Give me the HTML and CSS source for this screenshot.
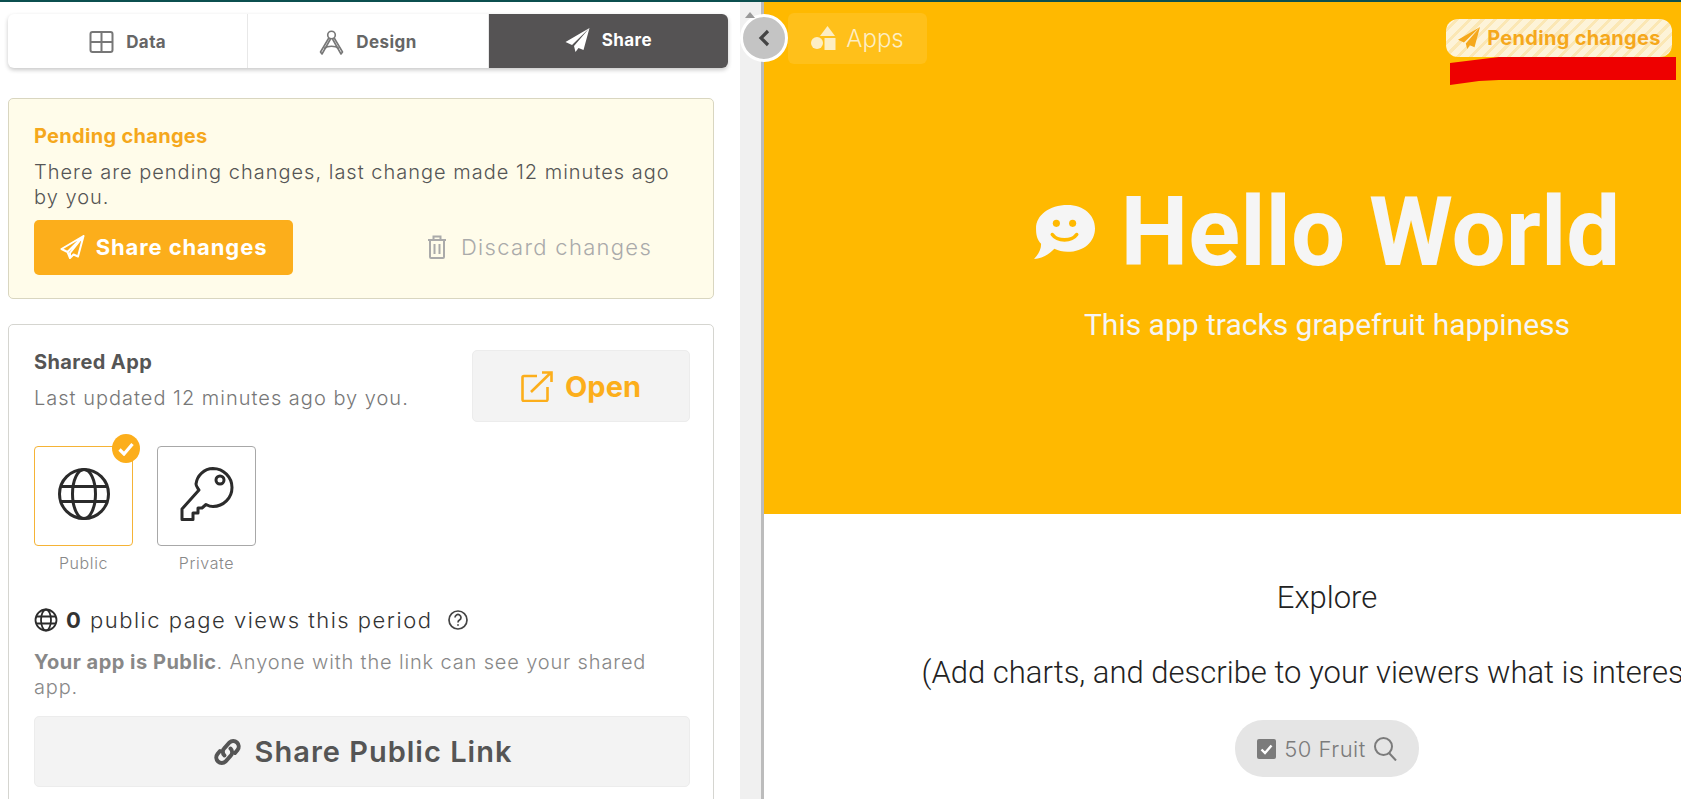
FILE: index.html

```html
<!DOCTYPE HTML>
<html>
<head>
<meta charset="utf-8">
<title>Share</title>
<link rel="stylesheet" href="styles.css">
</head>

<body>
<div class="topline"></div>
<div class="app">
	<div class="sidebar">
		<div class="tabs">
			<a class="tab">
				<svg width="25" height="22" viewBox="0 0 25 22" fill="none" stroke="#777" stroke-width="2"><rect x="1.5" y="1" width="22" height="20" rx="2"/><path d="M12.5 1v20M1.5 11h22"/></svg>
				<span>Data</span>
			</a>
			<a class="tab">
				<svg width="25" height="25" viewBox="0 0 25 25" fill="none" stroke="#777" stroke-width="1.600" stroke-linejoin="round"><circle cx="12.500" cy="5" r="3.800"/><path d="M9.800 8 L1.500 22 L3 24 L11.500 9M15.200 8 L23.500 22 L22 24 L13.500 9"/><path d="M5 18.500 C9 15.500 16 15.500 20 18.500"/></svg>
				<span>Design</span>
			</a>
			<a class="tab ac">
				<svg width="25" height="24" viewBox="0 0 25 24" fill="#fff"><path d="M24.500 0 L0.500 14 L7 17 Z M24.500 0 L9 18 L10.500 24 L13.500 20 L18.500 22 Z"/></svg>
				<span>Share</span>
			</a>
		</div>

		<div class="card pending">
			<h3>Pending changes</h3>
			<p>There are pending changes, last change made 12 minutes ago by you.</p>
			<div class="pending-actions">
				<a class="btn-share">
					<svg width="25" height="24" viewBox="0 0 25 24" fill="none" stroke="#fff" stroke-width="2" stroke-linejoin="round"><path d="M23.500 1 L1.500 14 L7.500 17 L10 23 L13.500 19.500 L18 21.500 Z M7.500 17 L23.500 1 L10 18 V23"/></svg>
					Share changes
				</a>
				<a class="btn-discard">
					<svg width="20" height="24" viewBox="0 0 20 24" fill="none" stroke="#aaa" stroke-width="2"><path d="M1 5h18M6.500 5V1.500h7V5M3 5v17a1 1 0 0 0 1 1h12a1 1 0 0 0 1-1V5M7.500 9v10M12.500 9v10"/></svg>
					Discard changes
				</a>
			</div>
		</div>

		<div class="card shared">
			<div class="shared-head">
				<div>
					<h4>Shared App</h4>
					<p class="updated">Last updated 12 minutes ago by you.</p>
				</div>
				<a class="btn-grey btn-open">
					<svg width="32" height="31" viewBox="0 0 32 31" fill="none" stroke="#fcae1b" stroke-width="2.6"><path d="M16 5H3a1.500 1.500 0 0 0-1.500 1.500v22a1.500 1.500 0 0 0 1.500 1.500h22a1.500 1.500 0 0 0 1.500-1.500V16M10 21 L30 1.500M21 1.500h9.500V11"/></svg>
					Open
				</a>
			</div>

			<div class="access">
				<div class="access-item">
					<div class="access-box on">
						<svg width="52" height="52" viewBox="0 0 52 52" fill="none" stroke="#2b2b2b" stroke-width="3"><circle cx="26" cy="26" r="24.500"/><ellipse cx="26" cy="26" rx="11.500" ry="24.500"/><path d="M3 18.500h46M3 33.500h46"/></svg>
						<span class="badge"><svg width="16" height="14" viewBox="0 0 16 14" fill="none" stroke="#fff" stroke-width="3.200"><path d="M1.500 7.500 L6 12 L14.500 2"/></svg></span>
					</div>
					<span>Public</span>
				</div>
				<div class="access-item">
					<div class="access-box">
						<svg width="54" height="54" viewBox="0 0 54 54" fill="none" stroke="#2b2b2b" stroke-width="3" stroke-linejoin="round"><path d="M33 1.500 A19 19 0 0 1 33 39.500 C29 39.500 27 38 26 37.500 L22 41 H18 V46 H13 V52.500 H2 V42 L19 23 C17 20 16 19 16 17 A17.500 17.500 0 0 1 33 1.500 Z"/><circle cx="40" cy="13" r="4"/></svg>
					</div>
					<span>Private</span>
				</div>
			</div>

			<div class="views">
				<svg width="24" height="24" viewBox="0 0 24 24" fill="none" stroke="#2b2b2b" stroke-width="1.800"><circle cx="12" cy="12" r="10.500"/><ellipse cx="12" cy="12" rx="5" ry="10.500"/><path d="M2 8.500h20M2 15.500h20"/></svg>
				<span><b>0</b> public page views this period</span>
				<svg class="help" width="20" height="20" viewBox="0 0 20 20" fill="none" stroke="#444" stroke-width="1.700"><circle cx="10" cy="10" r="9"/><path d="M7 7.500a3 3 0 1 1 4.500 2.600c-1 .6-1.500 1-1.500 2.400M10 14.200v1.600"/></svg>
			</div>

			<p class="note"><b>Your app is Public</b>. Anyone with the link can see your shared app.</p>

			<a class="btn-grey btn-link">
				<svg width="31" height="30" viewBox="0 0 31 30" fill="none" stroke="#555" stroke-width="4" stroke-linecap="round"><path d="M12.500 18.500 A5 5 0 0 1 12.500 11 L17.500 5.500 A5.500 5.500 0 0 1 25.500 13 L23 16"/><path d="M18.500 11.500 A5 5 0 0 1 18.500 19 L13.500 24.500 A5.500 5.500 0 0 1 5.500 17 L8 14"/></svg>
				Share Public Link
			</a>
		</div>
	</div>

	<div class="gutter"></div>

	<div class="preview">
		<div class="canvas">
			<div class="hero">
				<div class="hero-title">
					<svg width="61" height="55" viewBox="0 0 60 54"><path fill="#f5f5f5" d="M33 0 C49 0 60 10 60 23 C60 36 49 46 33 46 C28 46 24 45 20 43 C15 48 8 53 0 53 C4 49 7 44 7 38 C3 34 2 29 2 23 C2 10 15 0 33 0 Z"/><circle cx="22" cy="18" r="3.500" fill="#ffb900"/><circle cx="38" cy="18" r="3.500" fill="#ffb900"/><path d="M18 29 C23 36 37 36 42 29" fill="none" stroke="#ffb900" stroke-width="3.500" stroke-linecap="round"/></svg>
					<h1>Hello World</h1>
				</div>
				<p>This app tracks grapefruit happiness</p>
			</div>
			<div class="explore">
				<h2>Explore</h2>
				<p>(Add charts, and describe to your viewers what is interesting.)</p>
				<div class="filter">
					<svg width="19" height="20" viewBox="0 0 19 20"><rect width="19" height="20" rx="2" fill="#7b7b7b"/><path d="M4.500 10.500 L8 14 L14.500 6.500" fill="none" stroke="#fff" stroke-width="2.400"/></svg>
					<span>50 Fruit</span>
					<svg width="23" height="24" viewBox="0 0 23 24" fill="none" stroke="#7b7b7b" stroke-width="2"><circle cx="9.500" cy="9.500" r="8.500"/><path d="M15 16 L22 23.500"/></svg>
				</div>
			</div>
		</div>

		<div class="preview-bar">
			<a class="btn-apps">
				<svg width="25" height="25" viewBox="0 0 25 25" fill="#fdeec4"><circle cx="6" cy="17" r="6"/><path d="M16.500 0 L24 10 H9 Z"/><rect x="13.500" y="12" width="11" height="12"/></svg>
				Apps
			</a>
			<a class="pending-pill">
				<svg width="24" height="22" viewBox="0 0 25 24" fill="#f5a81c"><path d="M24.500 0 L0.500 14 L7 17 Z M24.500 0 L9 18 L10.500 24 L13.500 20 L18.500 22 Z"/></svg>
				Pending changes
			</a>
		</div>
	</div>
</div>

<div class="toggle">
	<svg width="12" height="18" viewBox="0 0 12 18" fill="none" stroke="#444" stroke-width="3.200"><path d="M10 2 L3 9 L10 16"/></svg>
</div>
<div class="tick"></div>
<svg class="scribble" width="228" height="29" viewBox="0 0 228 29"><path fill="#ee0000" d="M1 6 L50 0 H227 V23 H50 L30 24 L1 28 Z"/></svg>
</body>
</html>
```

FILE: styles.css

```css
* {margin:0; padding:0; box-sizing:border-box;}
html,body {height:799px; overflow:hidden;}
body {background:#fff; font-family:"Inter","Liberation Sans",sans-serif; color:#555; position:relative;}
a {display:flex; align-items:center; justify-content:center;}

.topline {height:2px; background:#0b4f4f;}
.app {display:flex; height:797px;}

/* left side */
.sidebar {width:740px; flex:none; padding:12px 26px 0 8px; overflow:hidden;}
.tabs {display:flex; width:720px; height:54px; border-radius:6px; box-shadow:0 2px 4px rgba(0,0,0,.22); margin-bottom:30px;}
.tab {flex:1; gap:12px; padding-top:2px; font-size:17px; letter-spacing:.4px; font-weight:700; color:#666; border-right:1px solid #e8e8e8;}
.tab.ac {background:#555354; color:#fff; border:0; border-radius:0 6px 6px 0;}
.tab.ac svg {margin-top:-4px;}
.tab.ac span {margin-top:-4px;}

.card {border:1px solid #d5d5d0; border-radius:5px; padding:0 23px 0 25px;}
.pending {height:201px; background:#fffcea; padding-top:25px; margin-bottom:25px; border-color:#d9d6c0;}
.pending h3 {font-size:20px; line-height:24px; letter-spacing:.3px; font-weight:700; color:#f5a81c; margin-bottom:12px;}
.pending p {font-size:20px; line-height:25px; letter-spacing:1px; font-weight:300; color:#555;}
.pending-actions {display:flex; align-items:center; margin-top:10px;}
.btn-share {width:259px; height:55px; gap:11px; background:#fcae1b; border-radius:5px; color:#fff; font-size:22px; letter-spacing:.9px; font-weight:700; padding-bottom:1px;}
.btn-discard {margin-left:134px; gap:14px; font-size:22px; letter-spacing:1.3px; font-weight:300; color:#aaa; padding-bottom:2px;}

.shared {height:520px;}
.shared-head {display:flex; justify-content:space-between; padding-top:25px;}
.shared-head h4 {font-size:20px; line-height:24px; letter-spacing:.4px; font-weight:700; margin-bottom:11px;}
.updated {font-size:20px; line-height:26px; letter-spacing:1px; font-weight:300; color:#777;}
.btn-grey {background:#f3f3f3; border:1px solid #ececec; border-radius:5px;}
.btn-open {width:218px; height:72px; gap:12px; font-size:29px; font-weight:700; color:#fcae1b;}

.access {display:flex; gap:24px; margin-top:24px;}
.access-item {display:flex; flex-direction:column; align-items:center; gap:7px; font-size:16px; letter-spacing:.6px; font-weight:300; color:#888;}
.access-box {width:99px; height:100px; display:flex; align-items:center; justify-content:center; border:1px solid #a8a8a8; border-radius:4px; position:relative; padding-bottom:5px;}
.access-box.on {border-color:#f5b336;}
.badge {position:absolute; top:-13px; right:-8px; width:28px; height:29px; border-radius:50%; background:#fcae1b; display:flex; align-items:center; justify-content:center;}

.views {display:flex; align-items:center; gap:8px; margin-top:33px; font-size:22px; letter-spacing:1.5px; font-weight:300; color:#333; height:28px;}
.views b {font-weight:700;}
.help {margin-left:8px;}
.note {margin-top:16px; font-size:20px; line-height:25px; letter-spacing:.85px; font-weight:300; color:#888;}
.note b {font-weight:700; letter-spacing:.5px;}
.btn-link {height:71px; margin-top:16px; gap:12px; font-size:29px; letter-spacing:1px; font-weight:600; color:#555;}

/* divider */
.gutter {width:24px; flex:none; background:#f0f0f0; border-right:3px solid #bcbcbc;}

/* preview */
.preview {flex:1; min-width:0; overflow:hidden; position:relative;}
.canvas {width:1126px;}
.hero {height:512px; background:#ffb900; padding-top:174px; text-align:center; color:#f5f5f5;}
.hero-title {display:flex; align-items:center; justify-content:center; gap:26px;}
.hero-title h1 {font-family:Roboto,"Liberation Sans",sans-serif; font-size:96px; line-height:112px; font-weight:700;}
.hero p {font-family:Roboto,"Liberation Sans",sans-serif; font-size:30px; line-height:36px; font-weight:400; margin-top:19px;}

.explore {font-family:Roboto,"Liberation Sans",sans-serif; font-weight:300; font-size:31px; color:#222; text-align:center; padding-top:66px;}
.explore h2 {font-size:31px; line-height:36px; font-weight:300;}
.explore p {line-height:36px; margin-top:39px; padding-left:20px; white-space:nowrap;}
.filter {width:184px; height:57px; margin:29px auto 0; background:#e5e5e5; border-radius:28px; display:flex; align-items:center; justify-content:center; gap:8px; font-family:"Inter","Liberation Sans",sans-serif; font-size:22px; letter-spacing:.5px; font-weight:300; color:#7b7b7b;}

.preview-bar {position:absolute; top:11px; left:24px; right:9px; display:flex; justify-content:space-between; align-items:flex-start;}
.btn-apps {width:139px; height:51px; gap:10px; background:rgba(255,255,255,.1); border-radius:6px; color:#fdeec4; font-size:24px; font-weight:300;}
.pending-pill {width:226px; height:38px; margin-top:6px; gap:6px; border-radius:12px; font-size:20px; letter-spacing:.3px; font-weight:700; color:#f5a81c; background:repeating-linear-gradient(-45deg,#fdf3d8 0,#fdf3d8 6px,#fbe7b4 6px,#fbe7b4 9px);}

/* things lying over the rest */
.toggle {position:absolute; left:740px; top:14px; width:48px; height:48px; border-radius:50%; background:#c4c4c4; border:3px solid #fff; display:flex; align-items:center; justify-content:center;}
.tick {position:absolute; left:745px; top:12px; border:5px solid transparent; border-top:0; border-bottom:6px solid #999;}
.scribble {position:absolute; left:1449px; top:57px;}
```
